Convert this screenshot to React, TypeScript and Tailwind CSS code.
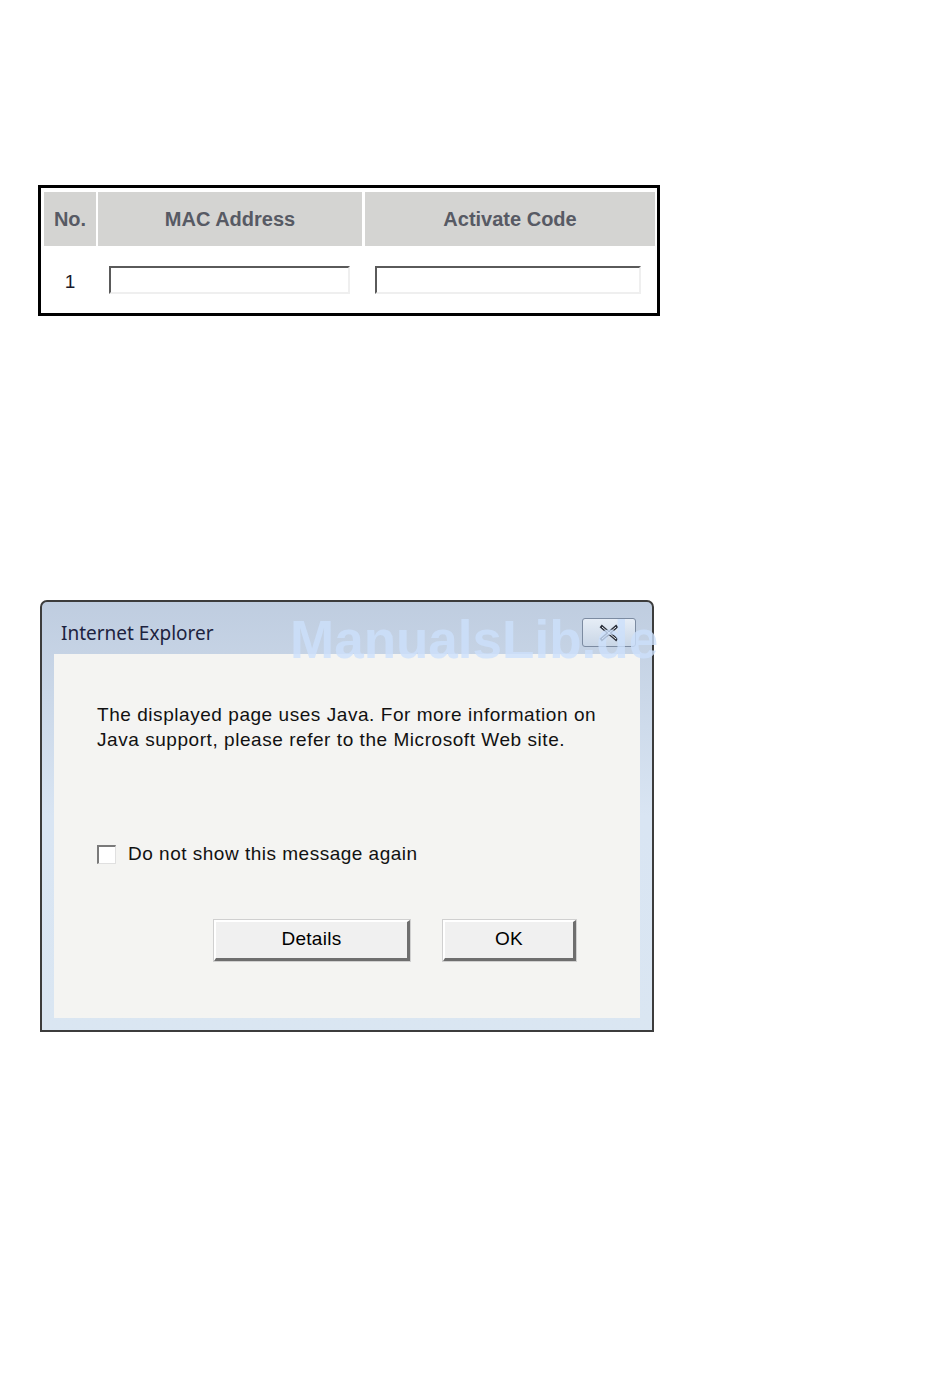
import React from 'react'

const arial = { fontFamily: '"Liberation Sans", Arial, sans-serif' }

const Field: React.FC<{ width: string }> = ({ width }) => (
  <div className={`${width} h-[28px] bg-white border-t-2 border-l-2 border-t-[#5a5a5a] border-l-[#5a5a5a] border-b-2 border-r-2 border-b-[#efefef] border-r-[#efefef]`} />
)

const ActivationTable = () => (
  <div className="ml-[38px] mt-[185px] w-[622px] border-[3px] border-black bg-white pt-[4px] pl-[3px]">
    <div className="grid grid-cols-[52px_264px_291px] gap-x-[2px] font-['Liberation_Sans',Arial,sans-serif]">
      <div className="h-[54px] bg-[#d4d4d2] flex items-center justify-center text-[20px] font-bold text-[#575a64]">No.</div>
      <div className="h-[54px] bg-[#d4d4d2] flex items-center justify-center text-[20px] font-bold text-[#575a64]">MAC Address</div>
      <div className="h-[54px] bg-[#d4d4d2] flex items-center justify-center text-[20px] font-bold text-[#575a64] ml-[1px]">Activate Code</div>
      <div className="h-[67px] flex items-center justify-center text-[19px] text-[#1a1a2a] pt-[5px]">1</div>
      <div className="h-[67px] flex items-center pl-[11px]">
        <Field width="w-[241px]" />
      </div>
      <div className="h-[67px] flex items-center pl-[11px]">
        <Field width="w-[266px]" />
      </div>
    </div>
  </div>
)

const Button: React.FC<{ label: string; width: string }> = ({ label, width }) => (
  <button
    className={`${width} h-[41px] bg-[#f0f0f0] border-t-2 border-l-2 border-t-white border-l-white border-b-[3px] border-r-[3px] border-b-[#6e6e6e] border-r-[#6e6e6e] outline outline-1 outline-[#d0d0d0] text-[19px] tracking-[0.3px] text-black flex items-center justify-center`}
    style={arial}
  >
    {label}
  </button>
)

const JavaDialog = () => (
  <div className="ml-[40px] mt-[284px] w-[614px] h-[432px] border-2 border-[#3c3c3c] rounded-t-[7px] bg-gradient-to-b from-[#bfcde0] via-[#d9e5f3] to-[#dae6f2] flex flex-col">
    <div className="h-[52px] flex items-start justify-between pl-[19px] pr-[16px]">
      <span className="mt-[17px] text-[19px] text-[#1d2340]" style={{ fontFamily: '"Noto Sans", "Open Sans", sans-serif' }}>
        Internet Explorer
      </span>
      <div className="mt-[16px] w-[54px] h-[29px] rounded-[3px] border border-[#7c8ba1] bg-gradient-to-b from-[#e6edf6] to-[#c9d6e6] flex items-center justify-center">
        <svg width="22" height="18" viewBox="0 0 22 18">
          <path d="M4 3 L18 15 M18 3 L4 15" stroke="#2a2f3a" strokeWidth="3.4" strokeLinecap="square" />
          <path d="M4 3 L18 15 M18 3 L4 15" stroke="#f2f6fb" strokeWidth="1" />
        </svg>
      </div>
    </div>
    <div className="mx-[12px] mb-[12px] flex-1 bg-[#f4f4f2] flex flex-col pt-[48px] pl-[43px]" style={arial}>
      <p className="text-[19px] leading-[25px] tracking-[0.55px] text-[#111]">
        The displayed page uses Java. For more information on
        <br />
        Java support, please refer to the Microsoft Web site.
      </p>
      <label className="mt-[88px] flex items-center gap-[12px] text-[19px] tracking-[0.5px] text-[#111]">
        <span className="w-[19px] h-[19px] bg-white border-t-2 border-l-2 border-t-[#7a7a7a] border-l-[#7a7a7a] border-b border-r border-b-[#e0e0e0] border-r-[#e0e0e0]" />
        Do not show this message again
      </label>
      <div className="mt-[51px] ml-[117px] flex gap-[33px]">
        <Button label="Details" width="w-[196px]" />
        <Button label="OK" width="w-[133px]" />
      </div>
    </div>
  </div>
)

export default function App() {
  return (
    <div className="relative w-[950px] h-[1392px] bg-white overflow-hidden flex flex-col items-start">
      <ActivationTable />
      <JavaDialog />
      <div
        className="absolute left-[290px] top-[613px] text-[53px] font-bold leading-none text-[rgba(204,224,251,0.8)] pointer-events-none select-none"
        style={arial}
      >
        ManualsLib.de
      </div>
    </div>
  )
}
